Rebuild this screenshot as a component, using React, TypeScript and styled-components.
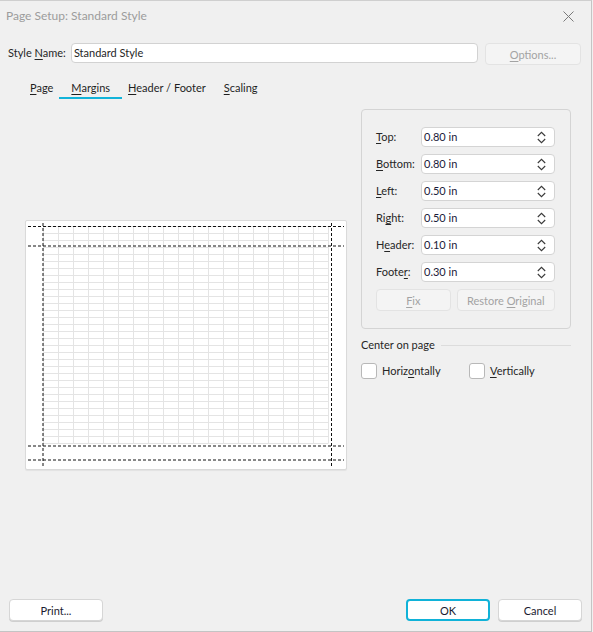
import styled, { createGlobalStyle } from 'styled-components';

const GlobalStyle = createGlobalStyle`
  html, body {
    margin: 0;
    padding: 0;
    background: #f0f0f0;
  }
  * {
    box-sizing: border-box;
  }
`;

const Dialog = styled.div`
  display: flex;
  flex-direction: column;
  width: 592px;
  height: 632px;
  background: #f0f0f0;
  border-top: 1px solid #cfcfcf;
  border-right: 1px solid #c4c4c4;
  border-bottom: 1px solid #c4c4c4;
  font-family: Lato, 'Noto Sans', sans-serif;
  font-size: 11px;
  line-height: 16px;
  color: #1f1f1f;
`;

const TitleBar = styled.div`
  display: flex;
  align-items: center;
  justify-content: space-between;
  height: 31px;
  padding: 0 17px 1px 6px;
`;

const Title = styled.span`
  color: #9c9c9c;
  font-size: 12px;
`;

const StyleRow = styled.div`
  display: flex;
  align-items: flex-start;
  height: 22px;
  margin-top: 11px;
  padding: 0 10px 0 8px;
`;

const RowLabel = styled.span`
  line-height: 20px;
  margin-right: 5px;
  color: #262626;
`;

const TextInput = styled.div`
  flex: 1;
  height: 20px;
  line-height: 18px;
  padding: 0 2px;
  background: #ffffff;
  border: 1px solid #d2d2d2;
  border-radius: 4px;
  color: #262626;
`;

const Button = styled.button<{ $width: number; $primary?: boolean }>`
  width: ${({ $width }) => $width}px;
  height: 22px;
  padding: 0;
  font-family: inherit;
  font-size: 11px;
  color: ${({ disabled }) => (disabled ? '#a3a3a3' : '#1b1b2f')};
  background: ${({ disabled }) => (disabled ? '#f4f4f4' : '#ffffff')};
  border: ${({ $primary, disabled }) =>
    $primary ? '2px solid #10b2d8' : disabled ? '1px solid #e3e3e3' : '1px solid #d6d6d6'};
  border-radius: 4px;
  box-shadow: ${({ disabled, $primary }) =>
    disabled || $primary ? 'none' : '0 1px 0 #cfcfcf'};
`;

const OptionsButton = styled(Button)`
  margin-left: 7px;
`;

const Tabs = styled.div`
  display: flex;
  margin-top: 15px;
  padding-left: 21px;
  height: 19px;
`;

const Tab = styled.div<{ $active?: boolean }>`
  margin: 0 -3px;
  padding: 0 12px;
  line-height: 16px;
  color: #1f1f1f;
  border-bottom: 2px solid ${({ $active }) => ($active ? '#12b3d9' : 'transparent')};
`;

const Content = styled.div`
  flex: 1;
  display: flex;
  padding: 10px 20px 19px 25px;
`;

const PreviewColumn = styled.div`
  flex: 1;
  display: flex;
  align-items: center;
`;

const PageSheet = styled.div`
  width: 322px;
  height: 250px;
  background: #ffffff;
  border: 1px solid #dadada;
  border-radius: 2px;
  box-shadow: 0 1px 1px rgba(0, 0, 0, 0.06);
  svg {
    display: block;
  }
`;

const SidePanel = styled.div`
  display: flex;
  flex-direction: column;
  width: 210px;
`;

const GroupBox = styled.div`
  display: flex;
  flex-direction: column;
  gap: 7px;
  padding: 17px 15px 16px 14px;
  border: 1px solid #d4d4d4;
  border-radius: 4px;
`;

const FieldRow = styled.div`
  display: flex;
  align-items: center;
  height: 20px;
`;

const FieldLabel = styled.span`
  width: 45px;
  color: #262626;
`;

const Spin = styled.div`
  flex: 1;
  display: flex;
  align-items: center;
  justify-content: space-between;
  height: 20px;
  padding: 0 8px 0 2px;
  background: #ffffff;
  border: 1px solid #d4d4d4;
  border-radius: 4px;
  color: #1b1b3a;
`;

const ActionRow = styled.div`
  display: flex;
  gap: 6px;
  height: 23px;
`;

const SectionHeader = styled.div`
  display: flex;
  align-items: center;
  gap: 6px;
  margin-top: 8px;
  color: #262626;
  &::after {
    content: '';
    flex: 1;
    height: 1px;
    background: #dcdcdc;
  }
`;

const CheckRow = styled.div`
  display: flex;
  margin-top: 10px;
`;

const CheckItem = styled.label<{ $width: number }>`
  display: flex;
  align-items: center;
  gap: 5px;
  width: ${({ $width }) => $width}px;
  color: #262626;
`;

const CheckBox = styled.span`
  width: 16px;
  height: 16px;
  background: #ffffff;
  border: 1px solid #b8b8b8;
  border-radius: 3px;
`;

const Footer = styled.div`
  display: flex;
  align-items: center;
  gap: 8px;
  padding: 0 9px 10px 9px;
  height: 32px;
`;

const Spacer = styled.div`
  flex: 1;
`;

const Key = styled.u`
  text-underline-offset: 2px;
`;

function Underlined({ text, at }: { text: string; at: number }) {
  return (
    <>
      {text.slice(0, at)}
      <Key>{text[at]}</Key>
      {text.slice(at + 1)}
    </>
  );
}

function Chevrons() {
  return (
    <svg width='9' height='13' viewBox='0 0 9 13' fill='none'>
      <path d='M0.8 5 L4.5 1.3 L8.2 5' stroke='#3a3a3a' strokeWidth='1.1' />
      <path d='M0.8 8 L4.5 11.7 L8.2 8' stroke='#3a3a3a' strokeWidth='1.1' />
    </svg>
  );
}

function CloseIcon() {
  return (
    <svg width='11' height='11' viewBox='0 0 11 11'>
      <path d='M0.5 0.5 L10.5 10.5 M10.5 0.5 L0.5 10.5' stroke='#7a7a7a' strokeWidth='1' />
    </svg>
  );
}

function PagePreview() {
  const cols = Array.from({ length: 20 }, (_, i) => 17 + i * 15);
  const rows = Array.from({ length: 32 }, (_, i) => 5 + i * 7);
  const hDash = [5.5, 25, 225, 239];
  const vDash = [17, 305.5];
  return (
    <svg width='320' height='248' viewBox='0 0 320 248'>
      <g stroke='#e4e4e4' strokeWidth='1'>
        {cols.map((x) => (
          <line key={'c' + x} x1={x + 0.5} y1={5} x2={x + 0.5} y2={222} />
        ))}
        {rows.map((y) => (
          <line key={'r' + y} x1={17} y1={y + 0.5} x2={302.5} y2={y + 0.5} />
        ))}
      </g>
      <g stroke='#111' strokeWidth='1' strokeDasharray='3 2'>
        {hDash.map((y) => (
          <line key={'h' + y} x1={2} y1={y} x2={318} y2={y} />
        ))}
        {vDash.map((x) => (
          <line key={'v' + x} x1={x} y1={2} x2={x} y2={245} />
        ))}
      </g>
    </svg>
  );
}

const fields = [
  { label: 'Top:', key: 0, value: '0.80 in' },
  { label: 'Bottom:', key: 0, value: '0.80 in' },
  { label: 'Left:', key: 0, value: '0.50 in' },
  { label: 'Right:', key: 2, value: '0.50 in' },
  { label: 'Header:', key: 1, value: '0.10 in' },
  { label: 'Footer:', key: 5, value: '0.30 in' },
];

export default function App() {
  return (
    <>
      <GlobalStyle />
      <Dialog>
        <TitleBar>
          <Title>Page Setup: Standard Style</Title>
          <CloseIcon />
        </TitleBar>

        <StyleRow>
          <RowLabel>
            Style <Underlined text='Name:' at={0} />
          </RowLabel>
          <TextInput>Standard Style</TextInput>
          <OptionsButton $width={96} disabled>
            <Underlined text='Options...' at={0} />
          </OptionsButton>
        </StyleRow>

        <Tabs>
          <Tab>
            <Underlined text='Page' at={0} />
          </Tab>
          <Tab $active>
            <Underlined text='Margins' at={0} />
          </Tab>
          <Tab>
            <Underlined text='Header / Footer' at={0} />
          </Tab>
          <Tab>
            <Underlined text='Scaling' at={0} />
          </Tab>
        </Tabs>

        <Content>
          <PreviewColumn>
            <PageSheet>
              <PagePreview />
            </PageSheet>
          </PreviewColumn>

          <SidePanel>
            <GroupBox>
              {fields.map((f) => (
                <FieldRow key={f.label}>
                  <FieldLabel>
                    <Underlined text={f.label} at={f.key} />
                  </FieldLabel>
                  <Spin>
                    <span>{f.value}</span>
                    <Chevrons />
                  </Spin>
                </FieldRow>
              ))}
              <ActionRow>
                <Button $width={75} disabled>
                  <Underlined text='Fix' at={0} />
                </Button>
                <Button $width={99} disabled>
                  Restore <Underlined text='Original' at={0} />
                </Button>
              </ActionRow>
            </GroupBox>

            <SectionHeader>Center on page</SectionHeader>
            <CheckRow>
              <CheckItem $width={108}>
                <CheckBox />
                <span>
                  <Underlined text='Horizontally' at={5} />
                </span>
              </CheckItem>
              <CheckItem $width={100}>
                <CheckBox />
                <span>
                  <Underlined text='Vertically' at={0} />
                </span>
              </CheckItem>
            </CheckRow>
          </SidePanel>
        </Content>

        <Footer>
          <Button $width={94}>Print...</Button>
          <Spacer />
          <Button $width={84} $primary>
            OK
          </Button>
          <Button $width={84}>Cancel</Button>
        </Footer>
      </Dialog>
    </>
  );
}
